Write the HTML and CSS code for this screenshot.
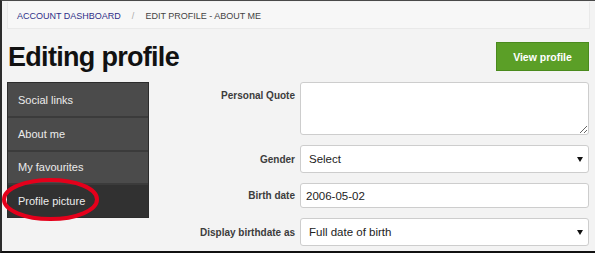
FILE: index.html
```html
<!DOCTYPE html>
<html>
<head>
<meta charset="utf-8">
<link rel="stylesheet" href="styles.css">
</head>
<body>
<div class="frame">
  <div class="crumbs">
    <a class="crumb-link" href="#">ACCOUNT DASHBOARD</a>
    <span class="crumb-sep">/</span>
    <span class="crumb-current">EDIT PROFILE - ABOUT ME</span>
  </div>
  <div class="header">
    <h1 class="title">Editing profile</h1>
    <button class="btn-view">View profile</button>
  </div>
  <div class="main">
    <ul class="side">
      <li class="side-item">Social links</li>
      <li class="side-item">About me</li>
      <li class="side-item">My favourites</li>
      <li class="side-item active">Profile picture</li>
    </ul>
    <form class="form">
      <label class="lbl lbl-top">Personal Quote</label>
      <textarea class="field area"></textarea>
      <label class="lbl">Gender</label>
      <div class="sel-wrap"><select class="field sel"><option>Select</option></select></div>
      <label class="lbl">Birth date</label>
      <input class="field inp" type="text" value="2006-05-02">
      <label class="lbl">Display birthdate as</label>
      <div class="sel-wrap"><select class="field sel"><option>Full date of birth</option></select></div>
    </form>
  </div>
</div>
<svg class="circle" width="595" height="253" viewBox="0 0 595 253">
  <ellipse cx="50.5" cy="199.5" rx="46.5" ry="19.5" fill="none" stroke="#e4001b" stroke-width="4"/>
</svg>
</body>
</html>
```

FILE: styles.css
```css
* { box-sizing: border-box; }
html, body { margin: 0; padding: 0; }
body {
  position: relative;
  width: 595px;
  height: 253px;
  overflow: hidden;
  font-family: "Liberation Sans", Arial, sans-serif;
  background: #f3f3f3;
}
.frame {
  width: 595px;
  height: 253px;
  border-left: 2px solid #2b2b2b;
  border-top: 1px solid #4a4a4a;
  border-bottom: 2px solid #111;
  background: #f3f3f3;
  padding: 1px 6px 0 5px;
}
.crumbs {
  height: 27px;
  margin-right: -1px;
  background: #f7f7f7;
  border: 1px solid #e9e9e9;
  border-top: none;
  padding-left: 9px;
  display: flex;
  align-items: center;
  font-size: 9px;
  padding-top: 1px;
}
.crumb-link { color: #2f2f88; text-decoration: none; }
.crumb-sep { color: #aaa; margin: 0 11px 0 11px; }
.crumb-current { color: #444; }
.header {
  height: 53px;
  padding-top: 13px;
  display: flex;
  justify-content: space-between;
  align-items: flex-start;
}
.title {
  margin: 0 0 0 1px;
  font-size: 27px;
  line-height: 31px;
  letter-spacing: -0.7px;
  font-weight: bold;
  color: #111;
}
.btn-view {
  width: 93px;
  height: 29px;
  background: #5b9f27;
  border: 1px solid #4a8a1d;
  color: #fff;
  font-family: "Liberation Sans", Arial, sans-serif;
  font-weight: bold;
  font-size: 10.5px;
  padding: 0;
}
.main {
  display: grid;
  grid-template-columns: 142px 1fr;
  align-items: start;
}
.side {
  list-style: none;
  margin: 0;
  padding: 0;
  border: 1px solid #2c2c2c;
  background: #4b4b4b;
}
.side-item {
  height: 33px;
  display: flex;
  align-items: center;
  padding-left: 10px;
  font-size: 11px;
  color: #ececec;
  background: #4b4b4b;
}
.side-item + .side-item { border-top: 2px solid #3b3b3b; height: 33.5px; }
.side-item.active { background: #313131; }
.form {
  display: grid;
  grid-template-columns: 1fr 289px;
  column-gap: 5px;
  row-gap: 10px;
  align-items: center;
  margin: 0;
}
.lbl {
  text-align: right;
  font-size: 10px;
  font-weight: bold;
  color: #3c3c3c;
}
.lbl-top { align-self: start; padding-top: 8px; }
.field {
  display: block;
  width: 289px;
  background: #fff;
  border: 1px solid #cdcdcd;
  border-radius: 3px;
  font-family: "Liberation Sans", Arial, sans-serif;
  font-size: 11.5px;
  color: #222;
  margin: 0;
  outline: none;
}
.area { height: 53px; resize: vertical; }
.inp { height: 25px; padding: 0 5px; }
.sel-wrap { position: relative; }
.sel {
  height: 28px;
  padding: 0 0 0 8px;
  appearance: none;
  -webkit-appearance: none;
}
.sel-wrap::after {
  content: "";
  position: absolute;
  right: 6px;
  top: 12px;
  border-left: 3px solid transparent;
  border-right: 3px solid transparent;
  border-top: 5px solid #111;
}
.circle {
  position: absolute;
  left: 0;
  top: 0;
  pointer-events: none;
}
```
